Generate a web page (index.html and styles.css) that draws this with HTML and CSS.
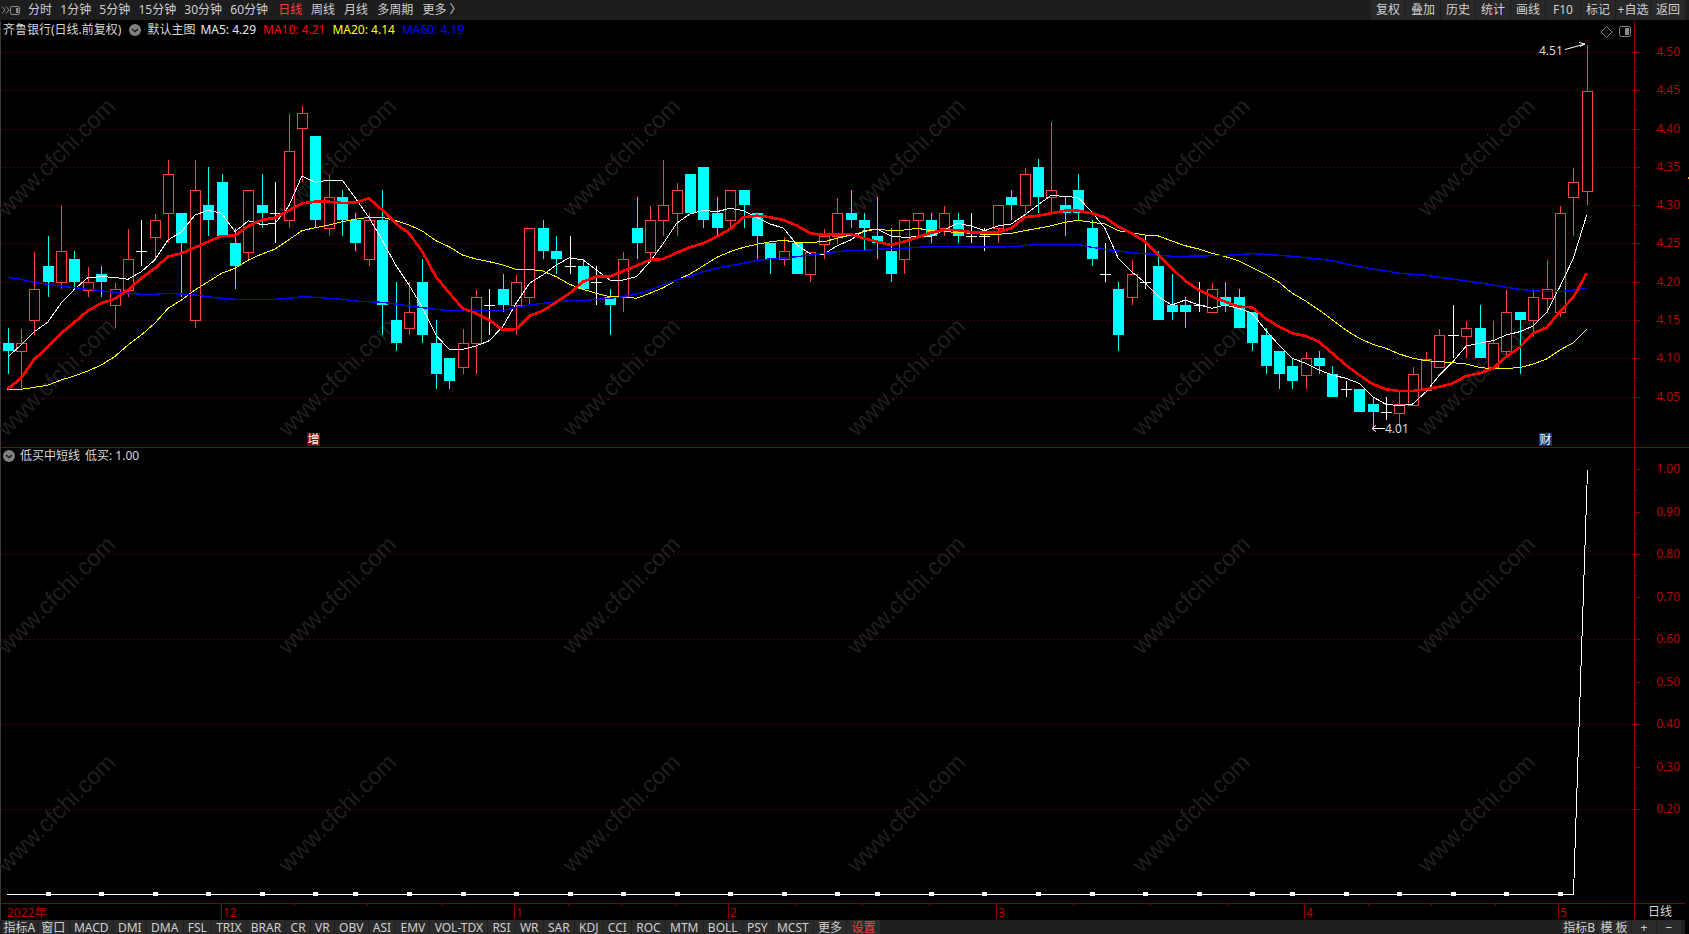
FILE: index.html
```html
<!DOCTYPE html>
<html lang="zh-CN">
<head>
<meta charset="utf-8">
<title>齐鲁银行 日线</title>
<link rel="stylesheet" href="styles.css">
</head>
<body>
<header class="topbar">
  <svg class="layout-icon" width="20" height="20" viewBox="0 0 20 20" aria-hidden="true">
    <path class="ico-line" d="M0 6.5l3 3.5-3 3.5M4 6.5l3 3.5-3 3.5"/>
    <rect class="ico-line" x="8.5" y="6.5" width="9" height="8" rx="1.5"/>
    <rect class="ico-fill" x="14" y="8" width="2.5" height="5"/>
  </svg>
  <nav class="periods">
    <span class="period">分时</span>
    <span class="period">1分钟</span>
    <span class="period">5分钟</span>
    <span class="period">15分钟</span>
    <span class="period">30分钟</span>
    <span class="period">60分钟</span>
    <span class="period active">日线</span>
    <span class="period">周线</span>
    <span class="period">月线</span>
    <span class="period">多周期</span>
    <span class="period">更多 〉</span>
  </nav>
  <nav class="actions">
    <span class="action">复权</span>
    <span class="action">叠加</span>
    <span class="action">历史</span>
    <span class="action">统计</span>
    <span class="action">画线</span>
    <span class="action">F10</span>
    <span class="action">标记</span>
    <span class="action">+自选</span>
    <span class="action">返回</span>
  </nav>
</header>

<main class="stage">
  <svg id="chart" class="chart" width="1689" height="899" viewBox="0 21 1689 899"></svg>

  <section class="pane pane-main">
    <div class="legend">
      <span class="title lead">齐鲁银行(日线.前复权)</span>
      <svg class="drop" width="12" height="12" viewBox="0 0 12 12" aria-hidden="true">
        <circle class="drop-disc" cx="6" cy="6" r="6"/>
        <path class="drop-mark" d="M3 5l3 2.6L9 5"/>
      </svg>
      <span class="title name">默认主图</span>
      <span class="ma ma5">MA5: 4.29</span>
      <span class="ma ma10">MA10: 4.21</span>
      <span class="ma ma20">MA20: 4.14</span>
      <span class="ma ma60">MA60: 4.19</span>
    </div>
  </section>

  <section class="pane pane-sub">
    <div class="legend legend-sub">
      <svg class="drop" width="12" height="12" viewBox="0 0 12 12" aria-hidden="true">
        <circle class="drop-disc" cx="6" cy="6" r="6"/>
        <path class="drop-mark" d="M3 5l3 2.6L9 5"/>
      </svg>
      <span class="title">低买中短线</span>
      <span class="title value">低买: 1.00</span>
    </div>
  </section>

  <div class="timebar">
    <span class="corner">日线</span>
  </div>
</main>

<footer class="tabbar">
  <span class="tab tight">指标A</span>
  <span class="tab cjk">窗口</span>
  <span class="tab">MACD</span>
  <span class="tab">DMI</span>
  <span class="tab">DMA</span>
  <span class="tab">FSL</span>
  <span class="tab">TRIX</span>
  <span class="tab">BRAR</span>
  <span class="tab">CR</span>
  <span class="tab">VR</span>
  <span class="tab">OBV</span>
  <span class="tab">ASI</span>
  <span class="tab">EMV</span>
  <span class="tab">VOL-TDX</span>
  <span class="tab">RSI</span>
  <span class="tab">WR</span>
  <span class="tab">SAR</span>
  <span class="tab">KDJ</span>
  <span class="tab">CCI</span>
  <span class="tab">ROC</span>
  <span class="tab">MTM</span>
  <span class="tab">BOLL</span>
  <span class="tab">PSY</span>
  <span class="tab">MCST</span>
  <span class="tab">更多</span>
  <span class="tab alert">设置</span>
  <span class="tab tight push">指标B</span>
  <span class="tab wide">模 板</span>
  <span class="tab sign">+</span>
  <span class="tab sign">−</span>
</footer>
<script src="chart.js"></script>
</body>
</html>
```
FILE: styles.css
```css
* { box-sizing: border-box; }

html, body {
  margin: 0;
  width: 1689px;
  height: 934px;
  overflow: hidden;
  background: #000;
}

body {
  display: flex;
  flex-direction: column;
  font: 12px/16px "Noto Sans", "Noto Sans CJK SC", sans-serif;
  color: #d4d4d4;
}

/* top toolbar */
.topbar {
  flex: none;
  height: 21px;
  display: flex;
  align-items: stretch;
  background: #1d1d1d;
  border-bottom: 1px solid #000;
}

.layout-icon { flex: none; width: 24px; height: 20px; }
.ico-line { fill: none; stroke: #8a8a8a; }
.ico-fill { fill: #8a8a8a; }

.periods { display: flex; align-items: center; }
.period { padding: 0 4.1px; white-space: nowrap; color: #cfcfcf; }
.period.active { color: #ff3c3c; margin-left: 2px; }
.period.active ~ .period { padding: 0 4.6px; }

.actions { display: flex; margin-left: auto; margin-right: 4px; gap: 1px; }
.action {
  width: 34px;
  height: 20px;
  line-height: 20px;
  text-align: center;
  white-space: nowrap;
  background: #282828;
  color: #cfcfcf;
}

/* chart stage */
.stage {
  position: relative;
  flex: none;
  height: 899px;
  display: flex;
  flex-direction: column;
  border-left: 1px solid #3a3a3a;
}

.chart { position: absolute; left: -1px; top: 0; }

.pane { position: relative; flex: none; }
.pane-main { height: 427px; }
.pane-sub { height: 456px; }

.legend {
  position: relative;
  display: flex;
  align-items: center;
  height: 18px;
  padding-left: 2px;
  gap: 6px;
  white-space: nowrap;
}
.legend-sub { height: 16px; gap: 5px; }

.title { color: #d8d8d8; }
.lead { margin-right: 2px; }
.name { margin-right: -2px; }
.value { margin-left: 0; }
.drop-disc { fill: #808080; }
.drop-mark { fill: none; stroke: #1a1a1a; stroke-width: 1.4; }
.ma { margin-left: 1px; }
.ma5 { color: #e6e6e6; }
.ma10 { color: #ff0000; }
.ma20 { color: #ffff00; }
.ma60 { color: #0000ff; }

.timebar { position: relative; flex: 1; display: flex; justify-content: flex-end; align-items: center; padding-right: 17px; }
.corner { color: #d8d8d8; }

/* SVG chart parts */
.grid { stroke: #8a0000; stroke-dasharray: 1 3; shape-rendering: crispEdges; }
.frame { stroke: #800000; shape-rendering: crispEdges; }
.pane-rule { stroke: #8a0000; shape-rendering: crispEdges; }
.mark { fill: #1f1f1f; font: 23.5px "Liberation Sans", sans-serif; text-anchor: middle; }
.wick-up { stroke: #ff4040; shape-rendering: crispEdges; }
.wick-down { stroke: #00ffff; shape-rendering: crispEdges; }
.wick-flat { stroke: #fff; shape-rendering: crispEdges; }
.body-up { fill: #000; stroke: #ff4040; shape-rendering: crispEdges; }
.body-down { fill: #00ffff; shape-rendering: crispEdges; }
.line { fill: none; shape-rendering: crispEdges; }
.l5 { stroke: #fff; }
.l10 { stroke: #ff0000; stroke-width: 2.7; stroke-linejoin: round; }
.l20 { stroke: #ffff00; }
.l60 { stroke: #0000ff; stroke-width: 1.4; }
.signal { fill: none; stroke: #fff; stroke-width: 1; shape-rendering: crispEdges; }
.node { fill: #fff; shape-rendering: crispEdges; }
.axis-label { fill: #b80000; font: 12px "Noto Sans", sans-serif; text-anchor: end; }
.month { fill: #b80000; font: 12px "Noto Sans", "Noto Sans CJK SC", sans-serif; }
.note { fill: #d8d8d8; font: 12px "Noto Sans", sans-serif; }
.note-arrow { fill: none; stroke: #fff; }
.badge-red { fill: #800000; shape-rendering: crispEdges; }
.badge-blue { fill: #0a3a70; shape-rendering: crispEdges; }
.badge-text { fill: #fff; font: 12px "Noto Sans CJK SC", sans-serif; text-anchor: middle; }
.tool { fill: none; stroke: #8a8a8a; }
.tool-fill { fill: #8a8a8a; }
.tag { fill: #e0a000; shape-rendering: crispEdges; }

/* bottom tabs */
.tabbar {
  flex: none;
  height: 14px;
  display: flex;
  gap: 1px;
  padding: 0 4px 0 2px;
  overflow: hidden;
  background: #1f1f1f;
  margin-right: 4px;
}
.tab {
  height: 16px;
  padding: 0 4.2px;
  white-space: nowrap;
  background: #2a2a2a;
  color: #cfcfcf;
}
.tab.tight { padding: 0 1px; }
.tab:first-child { padding: 0 1.5px; }
.tab.cjk { padding: 0 3.5px; }
.tab.alert { color: #ff3c3c; }
.tab.push { margin-left: auto; }
.tab.wide { width: 34px; padding: 0; text-align: center; }
.tab.sign { width: 24px; padding: 0; text-align: center; }
```
FILE: chart.js
```js
(function () {
  var NS = 'http://www.w3.org/2000/svg';
  var svg = document.getElementById('chart');
  var STEP = 13.383, X0 = 7.5, RIGHT = 1634;

  function add(tag, cls, attrs, text) {
    var el = document.createElementNS(NS, tag);
    if (cls) el.setAttribute('class', cls);
    for (var k in attrs) el.setAttribute(k, attrs[k]);
    if (text !== undefined) el.textContent = text;
    svg.appendChild(el);
    return el;
  }
  function xAt(i) { return Math.round(X0 + i * STEP); }
  function yAt(v) { return 100 + v / 3; }
  function hline(cls, y, x1, x2) { add('line', cls, { x1: x1, x2: x2, y1: y + 0.5, y2: y + 0.5 }); }

  /* watermark */
  [157, 377, 595, 813].forEach(function (y) {
    [56, 337, 621, 906, 1191, 1476].forEach(function (x) {
      add('text', 'mark', { x: x, y: y + 8, transform: 'rotate(-45 ' + x + ' ' + y + ')' }, 'www.cfchi.com');
    });
  });

  /* price axis and grid */
  var priceY = [52, 90, 129, 167, 205, 243, 282, 320, 358, 397];
  priceY.forEach(function (y, i) {
    hline('grid', y, 1, RIGHT);
    hline('frame', y, RIGHT, RIGHT + 6);
    if (i < priceY.length - 1) hline('frame', Math.round(y + 19), RIGHT, RIGHT + 3);
    add('text', 'axis-label', { x: 1680, y: y + 3.5 }, (4.5 - i * 0.05).toFixed(2));
  });

  /* candles: kind, high, body top, body bottom, low */
  var candles = [
    ['d',684,729,752,822],['u',687,729,754,867],['u',456,568,661,705],['d',408,498,546,591],['u',318,454,547,567],
    ['d',454,477,546,567],['u',502,547,569,591],['d',498,522,546,591],['u',548,568,616,684],['u',387,478,569,591],
    ['f',360,454,454,498],['u',342,361,410,478],['u',180,223,340,430],['d',339,339,429,590],['u',180,271,661,684],
    ['d',201,315,360,408],['d',222,246,407,408],['d',384,429,498,567],['u',271,271,455,477],['d',222,315,339,384],
    ['f',246,340,340,430],['u',42,154,361,384],['u',18,40,85,245],['d',108,108,360,384],['u',225,292,385,408],
    ['d',270,291,360,408],['d',339,360,429,453],['u',340,361,478,498],['d',270,360,614,705],['d',546,660,729,752],
    ['u',546,637,685,705],['d',477,546,705,729],['d',660,729,822,867],['d',775,775,843,867],['u',687,730,800,822],
    ['u',570,592,730,822],['f',567,616,616,705],
    ['d',522,567,614,636],['u',525,547,616,705],['u',385,385,592,616],['d',360,384,453,477],['d',408,453,477,522],
    ['f',408,498,498,522],['d',477,498,568,568],['f',498,547,547,614],['d',568,591,614,705],['u',456,478,592,636],
    ['d',291,384,429,477],['u',318,361,455,478],['u',180,316,361,408],['u',250,271,340,408],['d',222,222,339,339],
    ['d',201,201,360,384],['d',291,339,384,405],['u',271,271,361,384],['d',270,270,315,384],['d',339,339,408,477],
    ['d',429,429,477,522],['u',411,454,478,498],['d',429,429,522,522],['u',455,455,523,546],['u',387,408,431,477],
    ['u',294,340,408,431],['d',270,339,360,384],['d',339,360,384,453],['d',291,408,429,477],['d',384,453,522,546],
    ['u',361,361,478,522],['u',340,340,361,408],['d',339,360,408,429],['u',318,340,385,408],['d',339,360,408,429],
    ['f',339,408,408,429],['f',385,408,408,453],['u',316,316,385,430],
    ['d',270,291,315,360],['u',205,223,316,340],['d',177,201,291,339],['u',66,271,292,339],['d',291,315,339,408],
    ['d',222,270,339,360],['d',360,384,477,498],['f',429,523,523,546],['d',546,567,705,752],['u',480,523,592,615],
    ['f',408,547,547,567],['d',453,498,660,660],['d',522,615,636,660],['d',590,615,636,684],['f',546,616,616,636],
    ['u',549,568,637,637],['d',546,591,615,636],['d',567,591,684,684],['d',636,636,729,752],['d',684,705,798,822],
    ['d',753,753,822,867],['d',775,798,843,867],['u',756,775,824,867],['d',753,774,798,822],['d',798,822,891,891],
    ['f',843,867,867,891],['d',867,867,936,936],['d',891,912,936,982],['f',891,936,936,960],['u',870,913,938,982],
    ['u',801,823,914,914],['u',756,777,870,870],['u',687,706,800,800],['f',615,706,706,775],['u',662,685,707,775],
    ['d',615,684,774,774],['u',663,730,801,801],['u',570,637,754,770],['d',636,636,660,822],['u',570,591,660,711],
    ['u',480,567,594,639],['u',318,339,636,650],['u',204,246,291,408],['u',-165,-28,272,315]
  ];
  candles.forEach(function (c, i) {
    var x = xAt(i), kind = c[0];
    var hi = Math.round(yAt(c[1])), top = Math.round(yAt(c[2])), bot = Math.round(yAt(c[3])), lo = Math.round(yAt(c[4]));
    var wick = kind === 'u' ? 'wick-up' : kind === 'd' ? 'wick-down' : 'wick-flat';
    add('line', wick, { x1: x + 0.5, x2: x + 0.5, y1: hi, y2: lo });
    if (kind === 'u') add('rect', 'body-up', { x: x - 5 + 0.5, y: top + 0.5, width: 10, height: bot - top });
    if (kind === 'd') add('rect', 'body-down', { x: x - 5, y: top, width: 11, height: bot - top });
    if (kind === 'f') hline('wick-flat', top, x - 5, x + 6);
  });

  /* moving averages */
  var ma5 = [772,735,695,667,610,568,533,530,532,538,515,480,420,395,345,331,340,395,362,374,370,320,228,247,240,240,295,352,420,495,555,622,705,748,748,738,722,
    680,610,550,525,495,473,480,510,540,540,530,485,430,370,342,331,335,325,332,352,372,385,435,462,462,437,420,392,387,408,412,410,410,390,370,378,392,378,
    372,345,315,285,290,292,335,385,475,515,548,590,615,600,615,625,615,625,640,690,735,775,790,810,825,835,850,890,913,917,912,875,825,785,738,730,722,705,695,
    678,638,560,475,345];
  var ma10 = [867,835,778,742,700,667,632,610,597,570,535,505,470,460,443,425,408,407,378,360,353,332,310,305,305,309,308,295,330,370,400,455,530,578,625,640,660,
    690,687,648,632,607,580,545,530,530,513,497,480,477,458,442,430,410,387,352,347,352,360,377,400,405,403,402,415,425,435,425,412,398,390,390,397,398,397,
    385,352,347,340,332,332,340,352,380,400,425,465,505,542,570,590,605,620,622,655,680,700,708,725,760,795,825,852,868,873,873,868,860,850,828,820,805,770,742,
    700,683,635,592,520];
  var ma20 = [870,868,862,856,840,828,813,795,770,735,705,670,625,600,570,545,520,505,480,462,447,420,392,383,375,365,358,352,352,362,375,393,422,440,465,477,485,
    495,508,508,513,530,553,568,580,590,590,595,580,563,540,522,497,472,455,442,433,425,421,427,427,425,415,405,395,387,392,390,385,392,395,397,400,403,403,
    400,392,385,377,367,361,367,372,392,398,405,408,423,437,447,460,470,482,503,523,547,580,603,630,660,690,715,733,745,762,775,782,785,788,792,802,807,805,803,
    792,777,750,728,688];
  var ma60 = [532,538,547,553,558,563,568,572,577,579,583,583,580,582,585,590,595,598,598,598,598,595,590,592,595,598,603,605,607,612,618,623,628,632,632,633,631,
    632,622,615,610,606,602,602,598,595,590,582,570,555,540,528,515,505,497,490,482,476,474,470,465,460,455,451,451,448,445,445,442,440,439,439,441,441,441,
    440,437,433,433,433,433,442,448,453,458,461,465,469,469,468,467,466,464,461,463,466,469,473,477,482,492,500,507,513,520,523,526,532,537,543,549,555,562,568,
    572,575,575,570,565];
  function pts(a) {
    return a.map(function (v, i) { return (X0 + i * STEP).toFixed(1) + ',' + yAt(v).toFixed(1); }).join(' ');
  }
  add('polyline', 'line l5', { points: pts(ma5) });
  add('polyline', 'line l20', { points: pts(ma20) });
  add('polyline', 'line l60', { points: pts(ma60) });
  add('polyline', 'line l10', { points: pts(ma10) });

  /* price notes */
  add('text', 'note', { x: 1539, y: 54.5 }, '4.51');
  add('path', 'note-arrow', { d: 'M1565 49.5L1585 44M1579 42.5L1585 44L1580 46.5' });
  add('path', 'note-arrow', { d: 'M1385 428.5H1372M1376 425.5L1372 428.5L1376 431.5' });
  add('text', 'note', { x: 1385, y: 432.5 }, '4.01');

  /* event badges */
  add('rect', 'badge-red', { x: 307, y: 433, width: 13, height: 13 });
  add('text', 'badge-text', { x: 313.5, y: 444 }, '增');
  add('rect', 'badge-blue', { x: 1539, y: 433, width: 13, height: 13 });
  add('text', 'badge-text', { x: 1545.5, y: 444 }, '财');

  /* chart tools */
  add('path', 'tool', { d: 'M1606.5 26.5L1612 32L1606.5 37.5L1601 32Z' });
  add('rect', 'tool', { x: 1619.5, y: 26.5, width: 11, height: 10, rx: 2 });
  add('rect', 'tool-fill', { x: 1625, y: 28, width: 4, height: 7 });
  add('rect', 'tag', { x: 1688, y: 177, width: 1, height: 2 });

  /* pane frames */
  hline('pane-rule', 447, 1, 1689);
  hline('pane-rule', 903, 1, 1685);
  add('line', 'frame', { x1: RIGHT + 0.5, x2: RIGHT + 0.5, y1: 21, y2: 920 });

  /* indicator pane */
  [554, 639, 724, 809].forEach(function (y) { hline('grid', y, 1, RIGHT); });
  for (var t = 0; t < 9; t++) {
    var ty = Math.round(469 + t * 42.5);
    hline('frame', ty, RIGHT, RIGHT + 6);
    if (t < 8) hline('frame', Math.round(ty + 21), RIGHT, RIGHT + 3);
    add('text', 'axis-label', { x: 1680, y: ty + 4 }, (1 - t * 0.1).toFixed(2));
  }
  add('polyline', 'signal', { points: '7,894.5 ' + (xAt(117) + 0.5) + ',894.5 ' + (xAt(118) + 0.5) + ',470' });
  [3,7,11,15,19,23,26,30,34,38,42,46,50,54,58,62,65,69,73,77,81,85,89,93,96,100,104,108,112,116].forEach(function (i) {
    add('rect', 'node', { x: xAt(i) - 2, y: 892, width: 5, height: 4 });
  });

  /* time axis */
  [[7, '2022年', false], [221, '12', true], [514, '1', true], [728, '2', true], [996, '3', true], [1304, '4', true], [1558, '5', true]].forEach(function (m) {
    if (m[2]) add('line', 'frame', { x1: m[0] + 0.5, x2: m[0] + 0.5, y1: 903, y2: 919 });
    add('text', 'month', { x: m[2] ? m[0] + 2 : m[0], y: 916.5 }, m[1]);
  });
  [294, 367, 442, 568, 621, 675, 795, 862, 929, 1073, 1150, 1227, 1368, 1431, 1495].forEach(function (x) {
    add('line', 'frame', { x1: x + 0.5, x2: x + 0.5, y1: 903, y2: 906 });
  });
})();
```
